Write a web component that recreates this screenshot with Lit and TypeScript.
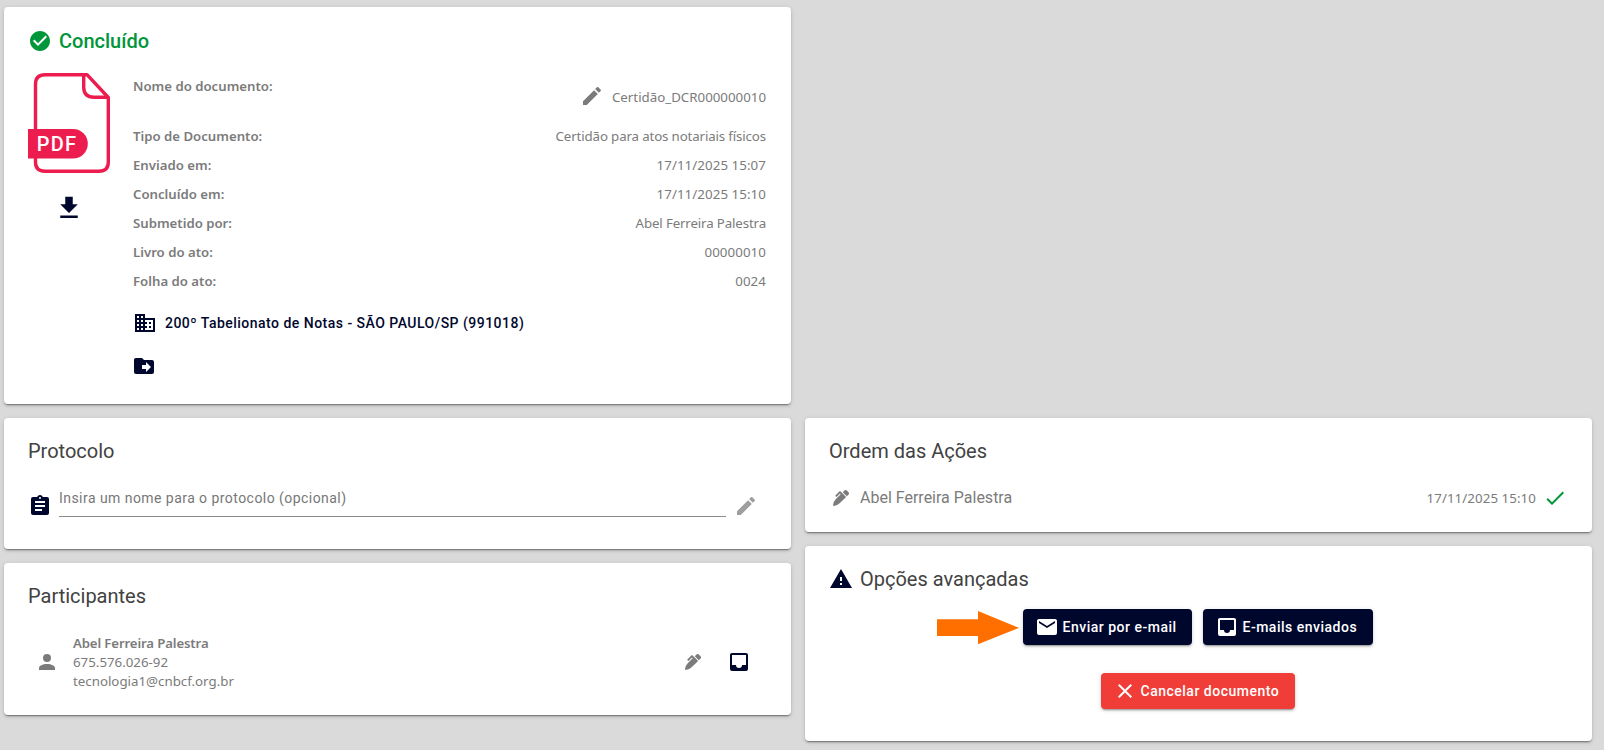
import { LitElement, css, html } from "lit";
import { customElement, property } from "lit/decorators.js";

const icons = {
  checkCircle:
    "M12 2C6.5 2 2 6.5 2 12S6.5 22 12 22 22 17.5 22 12 17.5 2 12 2M10 17L5 12L6.41 10.59L10 14.17L17.59 6.58L19 8L10 17Z",
  pencil:
    "M20.71,7.04C21.1,6.65 21.1,6 20.71,5.63L18.37,3.29C18,2.9 17.35,2.9 16.96,3.29L15.12,5.12L18.87,8.87M3,17.25V21H6.75L17.81,9.93L14.06,6.18L3,17.25Z",
  download: "M5,20H19V18H5M19,9H15V3H9V9H5L12,16L19,9Z",
  domain:
    "M18,15H16V17H18M18,11H16V13H18M20,19H12V17H14V15H12V13H14V11H12V9H20M10,7H8V5H10M10,11H8V9H10M10,15H8V13H10M10,19H8V17H10M6,7H4V5H6M6,11H4V9H6M6,15H4V13H6M6,19H4V17H6M12,7V3H2V21H22V7H12Z",
  folderMove:
    "M14,18V15H10V11H14V8L19,13M20,6H12L10,4H4C2.89,4 2,4.89 2,6V18A2,2 0 0,0 4,20H20A2,2 0 0,0 22,18V8C22,6.89 21.1,6 20,6Z",
  clipboard:
    "M17,9H7V7H17M17,13H7V11H17M14,17H7V15H14M12,3A1,1 0 0,1 13,4A1,1 0 0,1 12,5A1,1 0 0,1 11,4A1,1 0 0,1 12,3M19,3H14.82C14.4,1.84 13.3,1 12,1C10.7,1 9.6,1.84 9.18,3H5A2,2 0 0,0 3,5V19A2,2 0 0,0 5,21H19A2,2 0 0,0 21,19V5A2,2 0 0,0 19,3Z",
  account:
    "M12,4A4,4 0 0,1 16,8A4,4 0 0,1 12,12A4,4 0 0,1 8,8A4,4 0 0,1 12,4M12,14C16.42,14 20,15.79 20,18V20H4V18C4,15.79 7.58,14 12,14Z",
  inbox:
    "M19,15H15A3,3 0 0,1 12,18A3,3 0 0,1 9,15H5V5H19M19,3H5C3.89,3 3,3.9 3,5V19A2,2 0 0,0 5,21H19A2,2 0 0,0 21,19V5C21,3.89 20.1,3 19,3Z",
  check:
    "M21,7L9,19L3.5,13.5L4.91,12.09L9,16.17L19.59,5.59L21,7Z",
  alert: "M13,14H11V10H13M13,18H11V16H13M1,21H23L12,2L1,21Z",
  email:
    "M20,8L12,13L4,8V6L12,11L20,6M20,4H4C2.89,4 2,4.89 2,6V18A2,2 0 0,0 4,20H20A2,2 0 0,0 22,18V6C22,4.89 21.1,4 20,4Z",
  close:
    "M19,6.41L17.59,5L12,10.59L6.41,5L5,6.41L10.59,12L5,17.59L6.41,19L12,13.41L17.59,19L19,17.59L13.41,12L19,6.41Z",
  pen: "M497.94 74.17l-60.11-60.11c-18.75-18.75-49.16-18.75-67.91 0l-56.55 56.55 128.02 128.02 56.55-56.55c18.75-18.75 18.75-49.15 0-67.91zm-246.8-20.53c-15.62-15.62-40.94-15.62-56.56 0L75.8 172.43c-6.25 6.25-6.25 16.38 0 22.62l22.63 22.63c6.25 6.25 16.38 6.25 22.63 0l101.82-101.82 22.63 22.62L93.95 290.03A327.038 327.038 0 0 0 .17 485.11l-.03.23c-1.7 15.28 11.21 28.2 26.49 26.51a327.02 327.02 0 0 0 195.34-93.8l196.79-196.79-82.77-82.77-84.85-84.85z",
};

type IconName = keyof typeof icons;

@customElement("app-icon")
export class AppIcon extends LitElement {
  @property() name: IconName = "check";
  @property({ type: Number }) size = 24;
  @property({ type: Number }) box = 24;

  static styles = css`
    :host {
      display: block;
      flex: none;
    }
    svg {
      display: block;
      fill: currentColor;
    }
  `;

  render() {
    return html`<svg
      width=${this.size}
      height=${this.size}
      viewBox="0 0 ${this.box} ${this.box}"
    >
      <path d=${icons[this.name]} />
    </svg>`;
  }
}

@customElement("app-card")
export class AppCard extends LitElement {
  static styles = css`
    :host {
      display: block;
      box-sizing: border-box;
      padding: 0 24px;
      background: #fff;
      border-radius: 4px;
      box-shadow: 0 3px 1px -2px rgba(0, 0, 0, 0.2),
        0 2px 2px 0 rgba(0, 0, 0, 0.14), 0 1px 5px 0 rgba(0, 0, 0, 0.12),
        0 1px 0 0 rgba(0, 0, 0, 0.1);
    }
  `;

  render() {
    return html`<slot></slot>`;
  }
}

@customElement("app-root")
export class AppRoot extends LitElement {
  @property({ type: Array }) details = [
    ["Tipo de Documento:", "Certidão para atos notariais físicos"],
    ["Enviado em:", "17/11/2025 15:07"],
    ["Concluído em:", "17/11/2025 15:10"],
    ["Submetido por:", "Abel Ferreira Palestra"],
    ["Livro do ato:", "00000010"],
    ["Folha do ato:", "0024"],
  ];

  static styles = css`
    :host {
      display: grid;
      grid-template-columns: 787px 787px;
      grid-template-rows: 397px auto;
      gap: 14px;
      box-sizing: border-box;
      height: 750px;
      padding: 7px 0 0 4px;
      overflow: hidden;
      background: #dadada;
      color: #7b7b7b;
      font-family: "Noto Sans", sans-serif;
      font-size: 13.3px;
      line-height: 19px;
    }
    .column {
      display: flex;
      flex-direction: column;
      gap: 14px;
    }
    .left {
      grid-area: 2 / 1;
    }
    .right {
      grid-area: 2 / 2;
    }
    .title {
      display: flex;
      align-items: center;
      gap: 7px;
      box-sizing: border-box;
      height: 68px;
      margin: 0;
      padding-bottom: 2px;
      color: #424242;
      font: 400 20px/32px Roboto, sans-serif;
    }
    .title.done {
      height: 66px;
      padding: 1px 0 0;
      color: #009639;
      font-weight: 500;
    }
    .navy {
      color: #00072d;
    }
    .document {
      display: flex;
      gap: 23px;
    }
    .file {
      display: flex;
      flex-direction: column;
      align-items: center;
      gap: 20px;
      width: 82px;
    }
    .pdf {
      display: block;
    }
    .pdfText {
      fill: #fff;
      font: 500 20px Roboto, sans-serif;
      letter-spacing: 1.2px;
    }
    .details {
      flex: 1;
      padding-right: 1px;
    }
    .row {
      display: flex;
      justify-content: space-between;
      align-items: center;
      height: 29px;
    }
    .row.name {
      align-items: flex-start;
      box-sizing: border-box;
      height: 49px;
      padding-top: 4px;
    }
    .row.name .value {
      display: flex;
      align-items: center;
      gap: 8px;
      padding-top: 7px;
    }
    .fileName {
      padding-top: 2px;
    }
    .label {
      font-weight: 600;
      font-size: 13.2px;
    }
    .text {
      letter-spacing: -0.14px;
    }
    .number {
      letter-spacing: 0.08px;
    }
    .office {
      display: flex;
      align-items: center;
      gap: 8px;
      height: 24px;
      margin-top: 15px;
      font: 500 14px/24px Roboto, sans-serif;
      letter-spacing: 0.48px;
    }
    .move {
      margin: 19px 0 0 -1px;
    }
    .protocol {
      height: 131px;
    }
    .protocolRow {
      display: flex;
      gap: 8px;
      padding-top: 8px;
    }
    .field {
      box-sizing: border-box;
      flex: 1;
      height: 31px;
      margin: -8px 0 0 -1px;
      border-bottom: 1px solid #8b8b8b;
      color: #777;
      font: 400 14px/25px Roboto, sans-serif;
      letter-spacing: 0.45px;
    }
    .edit {
      margin-right: 9px;
      color: #9e9e9e;
    }
    .participants {
      height: 152px;
    }
    .person {
      display: flex;
      align-items: center;
      padding: 2px 12px 0 7px;
    }
    .personInfo {
      flex: 1;
      padding: 1px 0 0 14px;
    }
    .personInfo .label {
      letter-spacing: -0.13px;
    }
    .personInbox {
      margin: 0 4px 0 26px;
    }
    .order {
      height: 114px;
    }
    .action {
      display: flex;
      align-items: center;
      height: 24px;
      padding: 0 1px 0 4px;
    }
    .actionName {
      flex: 1;
      padding-left: 11px;
      font: 400 16px/24px Roboto, sans-serif;
    }
    .ok {
      margin-left: 7px;
      color: #009639;
    }
    .advanced {
      height: 195px;
    }
    .advanced .title {
      height: 63px;
      padding: 2px 0 0;
    }
    .buttons {
      display: flex;
      justify-content: center;
      gap: 11px;
      margin-bottom: 28px;
      padding-right: 2px;
    }
    .button {
      position: relative;
      display: flex;
      align-items: center;
      box-sizing: border-box;
      gap: 4px;
      width: 169px;
      height: 36px;
      padding: 0 12px;
      border: none;
      border-radius: 4px;
      background: #00072d;
      color: #fff;
      font: 500 14px/20px Roboto, sans-serif;
      letter-spacing: 0.5px;
      white-space: nowrap;
      box-shadow: 0 3px 1px -2px rgba(0, 0, 0, 0.2),
        0 2px 2px 0 rgba(0, 0, 0, 0.14), 0 1px 5px 0 rgba(0, 0, 0, 0.12);
    }
    .button.sent {
      width: 170px;
    }
    .button.cancel {
      width: 194px;
      background: #f03d37;
    }
    .pointer {
      position: absolute;
      right: 173px;
      top: 2px;
    }
  `;

  renderPdf() {
    return html`<svg class="pdf" width="82" height="100" viewBox="0 0 82 100">
      <g fill="none" stroke="#ed1c4f" stroke-width="3.4">
        <path
          d="M59 1.7H17Q7.5 1.7 7.5 11V89Q7.5 98.2 17 98.2H71Q80.3 98.2 80.3 89V24.5Z"
          stroke-linejoin="round"
        />
        <path d="M55.7 1.7V14Q55.7 24.3 66 24.3H80" />
      </g>
      <path d="M0 56H45A14.8 14.8 0 0 1 45 85.6H0Z" fill="#ed1c4f" />
      <text class="pdfText" x="8.7" y="78">PDF</text>
    </svg>`;
  }

  renderDocument() {
    return html`<app-card>
      <h2 class="title done">
        <app-icon name="checkCircle"></app-icon>Concluído
      </h2>
      <div class="document">
        <div class="file">
          ${this.renderPdf()}
          <app-icon class="navy" name="download" size="30"></app-icon>
        </div>
        <div class="details">
          <div class="row name">
            <span class="label">Nome do documento:</span>
            <span class="value">
              <app-icon name="pencil"></app-icon>
              <span class="fileName">Certidão_DCR000000010</span>
            </span>
          </div>
          ${this.details.map(
            ([label, value]) => html`<div class="row">
              <span class="label">${label}</span>
              <span class=${/^\d/.test(value) ? "number" : "text"}
                >${value}</span
              >
            </div>`
          )}
          <div class="office navy">
            <app-icon name="domain"></app-icon>200º Tabelionato de Notas - SÃO
            PAULO/SP (991018)
          </div>
          <app-icon class="move navy" name="folderMove"></app-icon>
        </div>
      </div>
    </app-card>`;
  }

  renderProtocol() {
    return html`<app-card class="protocol">
      <h2 class="title">Protocolo</h2>
      <div class="protocolRow">
        <app-icon class="navy" name="clipboard"></app-icon>
        <div class="field">Insira um nome para o protocolo (opcional)</div>
        <app-icon class="edit" name="pencil"></app-icon>
      </div>
    </app-card>`;
  }

  renderParticipants() {
    return html`<app-card class="participants">
      <h2 class="title">Participantes</h2>
      <div class="person">
        <app-icon name="account"></app-icon>
        <div class="personInfo">
          <div class="label">Abel Ferreira Palestra</div>
          <div>675.576.026-92</div>
          <div>tecnologia1@cnbcf.org.br</div>
        </div>
        <app-icon name="pen" size="16" box="512"></app-icon>
        <app-icon class="personInbox navy" name="inbox"></app-icon>
      </div>
    </app-card>`;
  }

  renderOrder() {
    return html`<app-card class="order">
      <h2 class="title">Ordem das Ações</h2>
      <div class="action">
        <app-icon name="pen" size="16" box="512"></app-icon>
        <span class="actionName">Abel Ferreira Palestra</span>
        <span class="number">17/11/2025 15:10</span>
        <app-icon class="ok" name="check"></app-icon>
      </div>
    </app-card>`;
  }

  renderAdvanced() {
    return html`<app-card class="advanced">
      <h2 class="title">
        <app-icon class="navy" name="alert"></app-icon>Opções avançadas
      </h2>
      <div class="buttons">
        <button class="button">
          <svg class="pointer" width="82" height="34" viewBox="0 0 82 34">
            <path d="M0 8.3H41V0L82 16.8L41 33.3V25H0Z" fill="#ff6f00" />
          </svg>
          <app-icon name="email"></app-icon>Enviar por e-mail
        </button>
        <button class="button sent">
          <app-icon name="inbox"></app-icon>E-mails enviados
        </button>
      </div>
      <div class="buttons">
        <button class="button cancel">
          <app-icon name="close"></app-icon>Cancelar documento
        </button>
      </div>
    </app-card>`;
  }

  render() {
    return html`
      ${this.renderDocument()}
      <div class="column left">
        ${this.renderProtocol()} ${this.renderParticipants()}
      </div>
      <div class="column right">
        ${this.renderOrder()} ${this.renderAdvanced()}
      </div>
    `;
  }
}
